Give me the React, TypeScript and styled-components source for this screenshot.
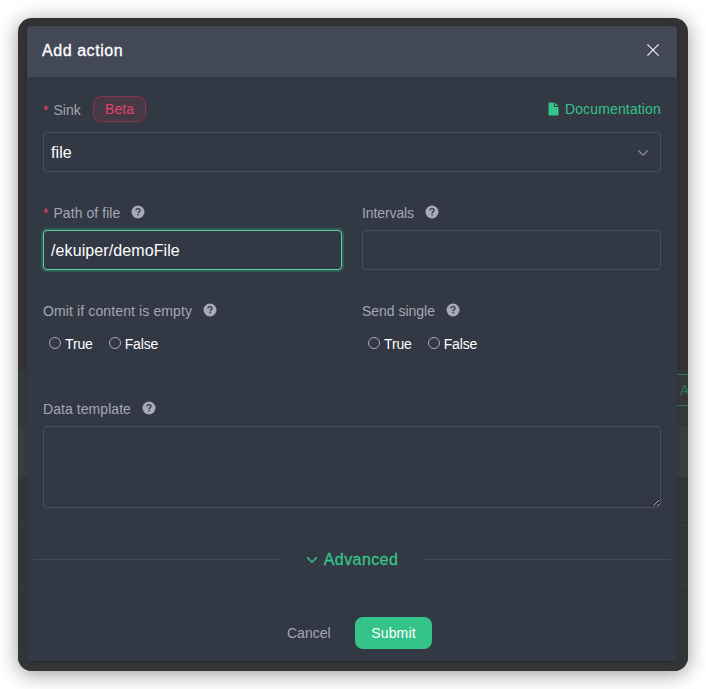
import React from 'react';
import styled, { createGlobalStyle, css } from 'styled-components';

const GlobalStyle = createGlobalStyle`
  *, *::before, *::after { box-sizing: border-box; }
  body {
    margin: 0;
    background: #fff;
    font-family: "Liberation Sans", Helvetica, Arial, sans-serif;
    font-size: 14px;
    overflow: hidden;
  }
`;

const Page = styled.div`
  height: 689px;
  padding: 18px;
`;

const Window = styled.div`
  position: relative;
  width: 670px;
  height: 653px;
  padding: 8px 11px 10px 9px;
  border-radius: 14px;
  background: #323234;
  box-shadow: 0 3px 20px rgba(0, 0, 0, 0.4);
`;

const Backdrop = styled.div`
  position: absolute;
  inset: 0;
  padding-top: 352px;
  border-radius: 14px;
  overflow: hidden;
`;

const BackRow = styled.div<{ $h: number; $bg: string; $line?: boolean }>`
  display: flex;
  justify-content: flex-end;
  height: ${(p) => p.$h}px;
  padding-top: 4px;
  background: ${(p) => p.$bg};
  border-bottom: ${(p) => (p.$line ? '1px solid #3a3c3e' : '0')};
`;

const BackButton = styled.div`
  width: 17px;
  height: 32px;
  padding-left: 9px;
  border: solid #2f7459;
  border-width: 1px 0;
  color: #2f7459;
  line-height: 31px;
  overflow: hidden;
`;

const Modal = styled.section`
  position: relative;
  display: flex;
  flex-direction: column;
  height: 635px;
  border-radius: 4px 4px 0 0;
  background: #333845;
  box-shadow: 0 1px 4px rgba(0, 0, 0, 0.2);
  overflow: hidden;
`;

const Header = styled.header`
  display: flex;
  align-items: center;
  justify-content: space-between;
  height: 51px;
  padding: 0 18px 2px 15px;
  background: #434857;
`;

const Title = styled.h1`
  margin: 0;
  color: #fff;
  font-size: 16px;
  font-weight: 400;
  letter-spacing: 0.56px;
  -webkit-text-stroke: 0.3px #fff;
`;

const CloseIcon = styled.svg`
  margin-bottom: 1px;
`;

const Form = styled.form`
  display: grid;
  grid-template-columns: 299px 299px;
  column-gap: 20px;
  grid-template-rows: 95px 98px 98px 149px;
  padding: 0 16px;
  height: 457px;
`;

const Field = styled.div<{ $wide?: boolean; $top?: number }>`
  display: flex;
  flex-direction: column;
  padding-top: ${(p) => p.$top ?? 26}px;
  ${(p) => p.$wide && css`grid-column: 1 / -1;`}
`;

const LabelRow = styled.div<{ $h?: number; $gap?: number }>`
  display: flex;
  align-items: center;
  height: ${(p) => p.$h ?? 28}px;
  margin-bottom: ${(p) => p.$gap ?? 4}px;
  color: #a3a7b4;
  white-space: nowrap;
`;

const LabelText = styled.label<{ $spacing?: number }>`
  padding-top: 2px;
  line-height: 18px;
  letter-spacing: ${(p) => p.$spacing ?? 0.06}px;
`;

const Required = styled.span`
  padding-top: 2px;
  margin-right: 5px;
  color: #e0426a;
`;

const Tag = styled.span`
  height: 26px;
  margin-left: 12px;
  padding: 0 11px;
  border: 1px solid #85384c;
  border-radius: 8px;
  background: #463845;
  color: #e0436a;
  line-height: 24px;
  letter-spacing: 0.1px;
`;

const DocLink = styled.a`
  display: flex;
  align-items: center;
  gap: 6px;
  margin-left: auto;
  color: #34c388;
  letter-spacing: 0.15px;
`;

const SelectBox = styled.div`
  display: flex;
  align-items: center;
  justify-content: space-between;
  height: 40px;
  padding: 1px 11px 0 7px;
  border: 1px solid #4a4f60;
  border-radius: 4px;
  color: #fff;
  font-size: 16px;
  letter-spacing: 0.1px;
`;

const Input = styled.input<{ $active?: boolean }>`
  width: 100%;
  height: 40px;
  padding: 2px 8px 0 7px;
  border: 1px solid ${(p) => (p.$active ? '#5ad3a2' : '#4a4f60')};
  border-radius: 4px;
  outline: none;
  background: #333845;
  color: #fff;
  font: 16px "Liberation Sans", Arial, sans-serif;
  letter-spacing: 0.1px;
  box-shadow: ${(p) => (p.$active ? '0 0 0 2px rgba(52, 195, 136, 0.25)' : 'none')};
`;

const TextArea = styled.textarea`
  width: 100%;
  height: 82px;
  border: 1px solid #4a4f60;
  border-radius: 4px;
  outline: none;
  background: #333845;
  resize: vertical;
`;

const Radios = styled.div`
  display: flex;
  gap: 16px;
  padding: 7px 0 0 6px;
`;

const RadioLabel = styled.span`
  display: flex;
  align-items: center;
  gap: 4px;
  height: 17px;
  color: #fff;
  letter-spacing: -0.15px;
`;

const Circle = styled.i`
  width: 12px;
  height: 12px;
  margin-top: -2px;
  border: 1px solid #a8abb6;
  border-radius: 50%;
`;

const Divider = styled.div`
  display: flex;
  align-items: center;
  height: 50px;
  padding: 0 6px;

  &::before, &::after {
    content: "";
    flex: 1;
    height: 1px;
    background: #444957;
  }
`;

const Advanced = styled.span`
  display: flex;
  align-items: center;
  justify-content: center;
  gap: 6px;
  width: 143px;
  padding-top: 1px;
  color: #34c388;
  font-size: 16px;
  letter-spacing: 0.42px;
  -webkit-text-stroke: 0.3px #34c388;
`;

const Footer = styled.footer`
  display: flex;
  align-items: center;
  height: 32px;
  margin-top: 33px;
  padding-left: 260px;
`;

const Cancel = styled.button`
  width: 68px;
  padding: 0;
  border: 0;
  background: none;
  color: #a3a7b4;
  font: 14px "Liberation Sans", Arial, sans-serif;
  text-align: left;
`;

const Submit = styled(Cancel)`
  width: 77px;
  height: 32px;
  border-radius: 8px;
  background: #34c388;
  color: #fff;
  letter-spacing: 0.15px;
  text-align: center;
`;

const HelpSvg = styled.svg`
  margin-left: 11px;
`;

const Help = () => (
  <HelpSvg width="14" height="14" viewBox="0 0 14 14">
    <circle cx="7" cy="7" r="6.5" fill="#a8abb7" />
    <path d="M5 5.6C5 4.3 5.8 3.6 7 3.6s2 .7 2 1.7c0 .8-.4 1.2-1 1.6-.6.4-.9.6-.9 1.3" fill="none" stroke="#333845" strokeWidth="1.3" />
    <rect x="6.4" y="9" width="1.4" height="1.4" fill="#333845" />
  </HelpSvg>
);

const Chevron = ({ color, width }: { color: string; width: number }) => (
  <svg width="12" height="12" viewBox="0 0 12 12">
    <path d="M1.2 3.4 6 8.2l4.8-4.800" fill="none" stroke={color} strokeWidth={width} />
  </svg>
);

const Choices = () => (
  <Radios>
    <RadioLabel><Circle />True</RadioLabel>
    <RadioLabel><Circle />False</RadioLabel>
  </Radios>
);

export default function App() {
  return (
    <Page>
      <GlobalStyle />
      <Window>
        <Backdrop>
          <BackRow $h={56} $bg="#353739"><BackButton>A</BackButton></BackRow>
          <BackRow $h={51} $bg="#3b3c3f" />
          <BackRow $h={49} $bg="#343537" $line />
          <BackRow $h={60} $bg="#343537" $line />
          <BackRow $h={85} $bg="#343537" />
        </Backdrop>
        <Modal>
          <Header>
            <Title>Add action</Title>
            <CloseIcon width="12" height="12" viewBox="0 0 12 12">
              <path d="M.4.4l11.2 11.2M11.6.4.4 11.6" stroke="#f1f1f4" strokeWidth="1.2" />
            </CloseIcon>
          </Header>
          <Form>
            <Field $wide $top={19}>
              <LabelRow $h={26} $gap={10}>
                <Required>*</Required>
                <LabelText>Sink</LabelText>
                <Tag>Beta</Tag>
                <DocLink>
                  <svg width="11" height="14" viewBox="0 0 11 14">
                    <path d="M1.300.500H6v4.500h4.500v7.700a.8.8 0 0 1-.8.800H1.300a.8.8 0 0 1-.8-.8V1.300a.8.8 0 0 1 .8-.8ZM7 .6 10.400 4H7Z" fill="#34c388" />
                  </svg>
                  Documentation
                </DocLink>
              </LabelRow>
              <SelectBox>file<Chevron color="#8b8f9c" width={1.3} /></SelectBox>
            </Field>
            <Field>
              <LabelRow><Required>*</Required><LabelText>Path of file</LabelText><Help /></LabelRow>
              <Input $active defaultValue="/ekuiper/demoFile" />
            </Field>
            <Field>
              <LabelRow><LabelText $spacing={-0.1}>Intervals</LabelText><Help /></LabelRow>
              <Input />
            </Field>
            <Field>
              <LabelRow><LabelText $spacing={0.12}>Omit if content is empty</LabelText><Help /></LabelRow>
              <Choices />
            </Field>
            <Field>
              <LabelRow><LabelText $spacing={-0.02}>Send single</LabelText><Help /></LabelRow>
              <Choices />
            </Field>
            <Field $wide>
              <LabelRow><LabelText>Data template</LabelText><Help /></LabelRow>
              <TextArea />
            </Field>
          </Form>
          <Divider>
            <Advanced><Chevron color="#34c388" width={1.5} />Advanced</Advanced>
          </Divider>
          <Footer>
            <Cancel type="button">Cancel</Cancel>
            <Submit type="button">Submit</Submit>
          </Footer>
        </Modal>
      </Window>
    </Page>
  );
}
